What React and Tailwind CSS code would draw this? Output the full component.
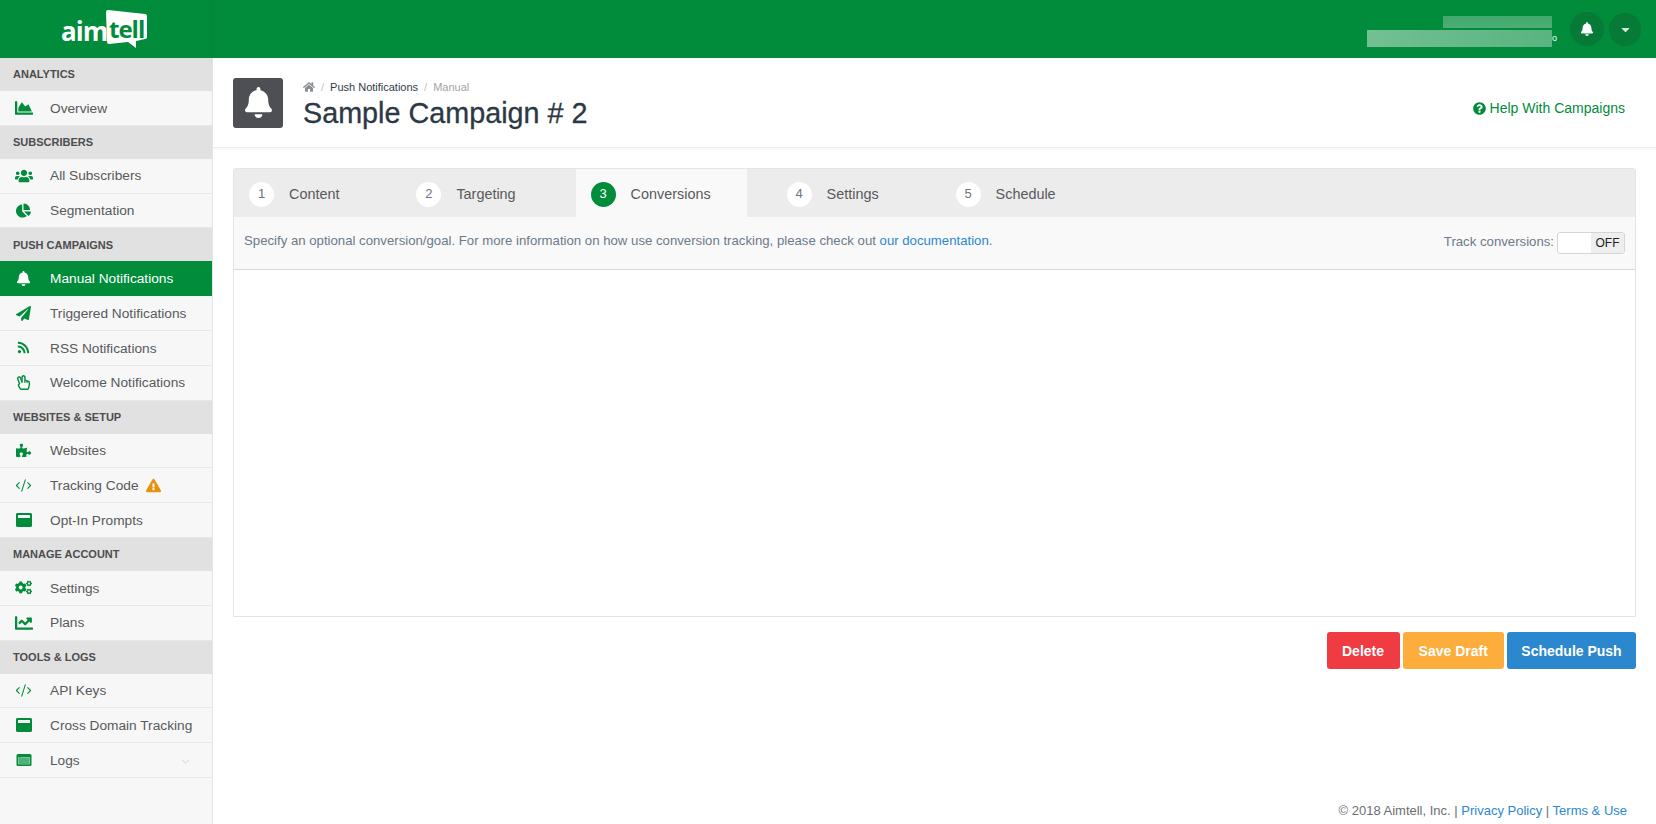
import React from 'react';
import { FaBell, FaCaretDown, FaChartArea, FaChartLine, FaChartPie, FaCogs, FaExclamationTriangle, FaHome, FaPaperPlane, FaPuzzlePiece, FaQuestionCircle, FaRegHandPeace, FaRss, FaUsers, FaWindowMaximize } from 'react-icons/fa';
import { ChevronDown, CodeXml } from 'lucide-react';

// logs icon is a filled panel with paler rows, no package has quite this one
function LogsIcon({ size }) {
    return (
        <svg width={size} height={size} viewBox="0 0 16 16">
            <rect x="0.5" y="2" width="15" height="12" rx="1.5" fill="#008c3b" />
            <rect x="2" y="5" width="12" height="7.5" fill="#7cc49a" />
            <path d="M5 7h8M5 9h8M5 11h8" stroke="#008c3b" strokeWidth="0.7" />
            <path d="M4 5v7.5" stroke="#008c3b" strokeWidth="0.7" />
        </svg>
    );
}

function ThinCode({ size }) {
    return <CodeXml size={size} strokeWidth={1.5} />;
}

const nav = [
    { title: 'ANALYTICS', items: [{ label: 'Overview', icon: FaChartArea, size: 18 }] },
    {
        title: 'SUBSCRIBERS',
        items: [
            { label: 'All Subscribers', icon: FaUsers, size: 18 },
            { label: 'Segmentation', icon: FaChartPie, size: 15 },
        ],
    },
    {
        title: 'PUSH CAMPAIGNS',
        items: [
            { label: 'Manual Notifications', icon: FaBell, size: 15, active: true },
            { label: 'Triggered Notifications', icon: FaPaperPlane, size: 15 },
            { label: 'RSS Notifications', icon: FaRss, size: 13 },
            { label: 'Welcome Notifications', icon: FaRegHandPeace, size: 15 },
        ],
    },
    {
        title: 'WEBSITES & SETUP',
        items: [
            { label: 'Websites', icon: FaPuzzlePiece, size: 15 },
            { label: 'Tracking Code', icon: ThinCode, size: 17, warn: true },
            { label: 'Opt-In Prompts', icon: FaWindowMaximize, size: 16 },
        ],
    },
    {
        title: 'MANAGE ACCOUNT',
        items: [
            { label: 'Settings', icon: FaCogs, size: 17 },
            { label: 'Plans', icon: FaChartLine, size: 18 },
        ],
    },
    {
        title: 'TOOLS & LOGS',
        items: [
            { label: 'API Keys', icon: ThinCode, size: 17 },
            { label: 'Cross Domain Tracking', icon: FaWindowMaximize, size: 16 },
            { label: 'Logs', icon: LogsIcon, size: 16, chevron: true },
        ],
    },
];

const steps = [
    { n: 1, label: 'Content', gap: 'mr-[26px]' },
    { n: 2, label: 'Targeting', gap: 'mr-[24px]' },
    { n: 3, label: 'Conversions', gap: 'mr-[25px]', active: true },
    { n: 4, label: 'Settings', gap: 'mr-[26px]' },
    { n: 5, label: 'Schedule', gap: 'mr-[26px]' },
];

function Logo() {
    return (
        <div className="flex items-center pl-[61px] h-full">
            <span className="w-[45px] text-white text-[26px] font-bold leading-none font-['Open_Sans',sans-serif] tracking-[-1px] mt-[3px]">aim</span>
            <div className="relative w-[41px] h-[38px]">
                <svg width="41" height="38" viewBox="0 0 41 38" className="absolute inset-0">
                    <path d="M2 0 L39 4 Q41 4 41 6 L41 27 Q41 29 39 29 L30 31 L30 38 L22 32 L3 34 Q1 34 1 32 L0 2 Q0 0 2 0 Z" fill="#fff" />
                </svg>
                <span className="absolute left-[3px] top-[7px] text-[#008c3b] text-[24px] font-bold leading-none font-['Open_Sans',sans-serif] tracking-[-1px]">tell</span>
            </div>
        </div>
    );
}

function Sidebar() {
    return (
        <aside className="w-[213px] shrink-0 bg-[#f7f7f7] border-r border-[#e6e6e6]">
            {nav.map(section => (
                <div key={section.title}>
                    <div className="h-[33px] bg-[#e1e1e1] pl-[13px] flex items-center text-[11px] font-bold text-[#4d4d4f]">{section.title}</div>
                    {section.items.map(item => {
                        const Icon = item.icon;
                        return (
                            <div
                                key={item.label}
                                className={`h-[34.8px] flex items-center text-[13.7px] ${item.active ? 'bg-[#008c3b] text-white' : 'border-b border-[#e8e8e8] text-[#58595b]'}`}
                            >
                                <span className={`w-[47px] mr-[3px] flex justify-center shrink-0 ${item.active ? 'text-white' : 'text-[#008c3b]'}`}>
                                    <Icon size={item.size} />
                                </span>
                                <span className={item.active ? '' : 'pt-[2px]'}>{item.label}</span>
                                {item.warn && <FaExclamationTriangle size={15} className="ml-[7px] text-[#e8920c]" />}
                                {item.chevron && <ChevronDown size={13} strokeWidth={1} className="ml-auto mr-[20px] mt-[3px] text-[#b5b5b5]" />}
                            </div>
                        );
                    })}
                </div>
            ))}
        </aside>
    );
}

export default function App() {
    return (
        <div className="h-[824px] flex flex-col overflow-hidden bg-white font-['Liberation_Sans',Arial,sans-serif]">
            <header className="h-[58px] shrink-0 bg-[#008c3b] flex">
                <div className="w-[213px] shrink-0 border-r border-[#0a8039]">
                    <Logo />
                </div>
                <div className="flex-1 flex justify-end items-center pr-[15px]">
                    <div className="relative w-[185px] h-[31px] mr-[18px] mt-[5px] flex flex-col items-end gap-[2px]">
                        <div className="w-[109px] h-[12px] bg-gradient-to-b from-white/25 to-white/30" />
                        <div className="w-[185px] h-[17px] bg-gradient-to-r from-white/45 to-white/35" />
                        <span className="absolute left-full top-[18px] text-white text-[9px] leading-none">o</span>
                    </div>
                    <div className="w-[34px] h-[34px] rounded-full bg-[#067a36] flex items-center justify-center text-white">
                        <FaBell size={14} />
                    </div>
                    <div className="w-[32px] h-[33px] ml-[5px] rounded-full bg-[#067a36] flex items-center justify-center text-[#d6e9dc]">
                        <FaCaretDown size={13} />
                    </div>
                </div>
            </header>
            <div className="flex-1 flex min-h-0">
                <Sidebar />
                <main className="flex-1 flex flex-col min-w-0">
                    <div className="h-[90px] shrink-0 flex items-center pl-[20px] pr-[31px] border-b border-[#ececec] shadow-[0_1px_3px_rgba(0,0,0,0.04)]">
                        <div className="w-[50px] h-[50px] rounded-[3px] bg-[#4d4f54] flex items-center justify-center text-white">
                            <FaBell size={31} />
                        </div>
                        <div className="ml-[20px] mt-[5px]">
                            <div className="flex items-center text-[11px] leading-[14px] text-[#2f3b47]">
                                <FaHome size={12} className="text-[#8a8f94]" />
                                <span className="mx-[6px] text-[#c4c4c4]">/</span>
                                <span>Push Notifications</span>
                                <span className="mx-[6px] text-[#c4c4c4]">/</span>
                                <span className="text-[#a3a3a3]">Manual</span>
                            </div>
                            <h1 className="pt-[1px] text-[28.75px] leading-[36px] text-[#2c3844] [-webkit-text-stroke:0.3px_#2c3844]">Sample Campaign # 2</h1>
                        </div>
                        <a className="ml-auto mt-[11px] flex items-center text-[14px] text-[#008c3b]">
                            <FaQuestionCircle size={13} className="mr-[4px]" />
                            Help With Campaigns
                        </a>
                    </div>

                    <div className="pt-[20px] pl-[20px] pr-[20px]">
                        <div className="border border-[#e4e4e4] rounded-t-[3px]">
                            <div className="h-[48px] bg-[#ececec] flex">
                                {steps.map(step => (
                                    <div
                                        key={step.n}
                                        className={`flex items-center pl-[15px] pr-[36px] text-[14.4px] text-[#58595b] ${step.gap} ${step.active ? 'bg-[#f9f9f9]' : ''}`}
                                    >
                                        <span className={`w-[25px] h-[25px] mt-[2px] rounded-full flex items-center justify-center text-[13px] ${step.active ? 'bg-[#008c3b] text-white' : 'bg-white text-[#6b7480]'}`}>
                                            {step.n}
                                        </span>
                                        <span className="ml-[15px] pt-[4px]">{step.label}</span>
                                    </div>
                                ))}
                            </div>
                            <div className="h-[53px] bg-[#f9f9f9] border-b border-[#d9d9d9] flex items-center justify-between pl-[10px] pr-[10px] text-[13.2px] text-[#6c7a89]">
                                <p className="mt-[-4px]">
                                    Specify an optional conversion/goal. For more information on how use conversion tracking, please check out <a className="text-[#2b87ce]">our documentation.</a>
                                </p>
                                <div className="flex items-center mt-[-1px]">
                                    <span className="pb-[2px]">Track conversions:</span>
                                    <div className="ml-[3px] w-[68px] h-[22px] bg-white border border-[#d5d5d5] rounded-[3px] flex justify-end overflow-hidden">
                                        <span className="w-[33px] bg-[#eeeeee] text-[#222] text-[12px] flex items-center justify-center">OFF</span>
                                    </div>
                                </div>
                            </div>
                            <div className="h-[346px] bg-white" />
                        </div>
                        <div className="flex justify-end gap-[3.5px] mt-[15px]">
                            <button className="w-[73px] h-[37px] pt-[1px] rounded-[3px] bg-[#ef3b42] text-white text-[14px] font-bold">Delete</button>
                            <button className="w-[100.5px] h-[37px] pt-[1px] rounded-[3px] bg-[#fdad3b] text-white text-[14px] font-bold">Save Draft</button>
                            <button className="w-[129px] h-[37px] pt-[1px] rounded-[3px] bg-[#2b87ce] text-white text-[14px] font-bold">Schedule Push</button>
                        </div>
                    </div>

                    <footer className="mt-auto pb-[4px] pr-[29px] text-right text-[13px] text-[#6d6e71]">
                        © 2018 Aimtell, Inc. | <a className="text-[#2b87ce]">Privacy Policy</a> | <a className="text-[#2b87ce]">Terms &amp; Use</a>
                    </footer>
                </main>
            </div>
        </div>
    );
}
